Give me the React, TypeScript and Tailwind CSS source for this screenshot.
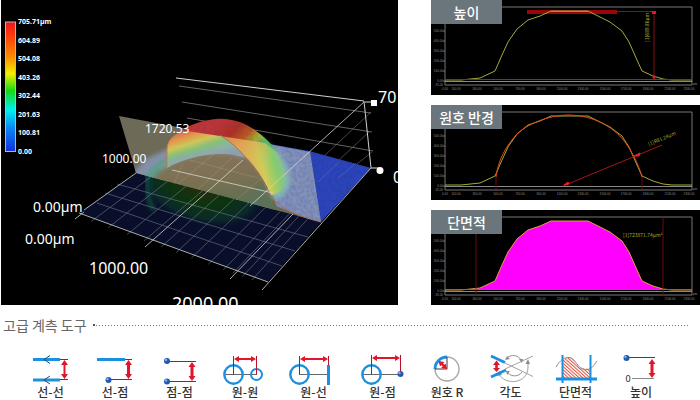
import type { ReactNode } from 'react';

type Point = [number, number];

interface ProfileProps {
  label: string;
  under?: ReactNode;
  curveColor?: string;
  children?: ReactNode;
}

interface Tool {
  name: string;
  icon: ReactNode;
}

const SCALE = ['705.71µm', '604.89', '504.08', '403.26', '302.44', '201.63', '100.81', '0.00'];

const PROFILE: Point[] = [
  [14, 80], [30, 80], [49, 78], [64, 71], [71, 55], [77, 42], [86, 29], [97, 20], [109, 16],
  [120, 11], [157, 11], [167, 16], [179, 22], [191, 31], [198, 42], [206, 60], [211, 71],
  [222, 76], [232, 79], [241, 80], [261, 80],
];
const PROFILE_POINTS = PROFILE.map((p) => p.join(',')).join(' ');

const X_TICKS = [14, 25, 46, 67, 89, 110, 131, 152, 174, 195, 217, 239, 258];
const Y_TICKS = [31, 41, 51, 61, 71];

// Position of the cross lines along the front edge of the floor
const FLOOR_LINES = [0.08, 0.17, 0.27, 0.36, 0.45, 0.53, 0.61, 0.7, 0.78, 0.83, 0.88, 0.93];

const floorFront = (t: number): Point => [79 + 189 * t, 213 + 69 * t];
const floorBack = (t: number): Point => [136 + 185 * t, 173 + 49 * t];

function SurfaceView() {
  return (
    <svg viewBox="1 0 397 305" className="block w-full bg-black" role="img" aria-label="3D">
      <defs>
        <linearGradient id="scale" x1="0" y1="0" x2="0" y2="1">
          <stop offset="0" stopColor="#f0141e" />
          <stop offset="0.1" stopColor="#fb3a0c" />
          <stop offset="0.27" stopColor="#fb8a00" />
          <stop offset="0.4" stopColor="#f2f200" />
          <stop offset="0.53" stopColor="#14d814" />
          <stop offset="0.68" stopColor="#00f0f0" />
          <stop offset="0.82" stopColor="#0a86f4" />
          <stop offset="1" stopColor="#1030e0" />
        </linearGradient>
        <linearGradient id="cap" x1="0" y1="0" x2="1" y2="0.35">
          <stop offset="0" stopColor="#b8362c" />
          <stop offset="0.35" stopColor="#c43436" />
          <stop offset="0.6" stopColor="#b03022" />
          <stop offset="0.76" stopColor="#bd5a1c" />
          <stop offset="0.88" stopColor="#a5b030" />
          <stop offset="1" stopColor="#58b468" />
        </linearGradient>
        <linearGradient id="wall" gradientUnits="userSpaceOnUse" x1="188" y1="128" x2="199" y2="163">
          <stop offset="0" stopColor="#d4664c" />
          <stop offset="0.22" stopColor="#e2974c" />
          <stop offset="0.42" stopColor="#cdc65a" />
          <stop offset="0.6" stopColor="#86c078" />
          <stop offset="0.8" stopColor="#8cb2a8" />
          <stop offset="1" stopColor="#909fb0" />
        </linearGradient>
        <linearGradient id="flank" gradientUnits="userSpaceOnUse" x1="246" y1="164" x2="286" y2="152">
          <stop offset="0" stopColor="#e3ae58" />
          <stop offset="0.35" stopColor="#d2cb58" />
          <stop offset="0.65" stopColor="#86cc6c" />
          <stop offset="1" stopColor="#84b8b4" />
        </linearGradient>
        <linearGradient id="flankTop" gradientUnits="userSpaceOnUse" x1="220" y1="130" x2="262" y2="186">
          <stop offset="0" stopColor="#dc7450" />
          <stop offset="0.35" stopColor="#e2a054" stopOpacity="0.8" />
          <stop offset="0.8" stopColor="#c8c85c" stopOpacity="0" />
        </linearGradient>
        <linearGradient id="inside" x1="0" y1="0" x2="0.2" y2="1">
          <stop offset="0" stopColor="#8a7660" />
          <stop offset="0.6" stopColor="#7c7052" />
          <stop offset="1" stopColor="#5a7052" />
        </linearGradient>
        <radialGradient id="under" gradientUnits="userSpaceOnUse" cx="200" cy="184" r="66" gradientTransform="matrix(1 .2 0 .6 0 36)">
          <stop offset="0" stopColor="#2b2a0c" />
          <stop offset="0.45" stopColor="#0c340f" />
          <stop offset="0.8" stopColor="#0a2a28" />
          <stop offset="1" stopColor="#0a1330" stopOpacity="0" />
        </radialGradient>
        <filter id="soft" x="-20%" y="-20%" width="140%" height="140%">
          <feGaussianBlur stdDeviation="2" />
        </filter>
        <filter id="grain" x="0" y="0" width="100%" height="100%">
          <feTurbulence type="fractalNoise" baseFrequency="0.28" numOctaves="2" seed="4" />
          <feColorMatrix values="0 0 0 0 0.02  0 0 0 0 0.05  0 0 0 0 0.35  1.6 0 0 0 -0.55" />
          <feComposite in2="SourceGraphic" operator="in" />
        </filter>
        <clipPath id="floorClip">
          <path d="M79 213 136 173 321 222 268 282Z" />
        </clipPath>
        <clipPath id="planeClip">
          <path d="M119 116 310 152 321 222 136 173Z" />
        </clipPath>
      </defs>

      {/* Back wall */}
      <g stroke="#7c7c7c" strokeWidth="0.8" fill="none">
        <path d="M179 86 371 113M182 102 372 132M187 118 373 151" />
        <path d="M371 112 323 157M369 132 338 161M372 152 357 164" opacity="0.7" />
      </g>
      <path d="M176 78 364 101 371 168" stroke="#d0d0d0" fill="none" />

      {/* Floor in front of the section plane */}
      <path d="M79 213 136 173 321 222 268 282Z" fill="#090f2a" />
      <g clipPath="url(#floorClip)">
        <path d="M145 160C143 210 158 224 190 232 225 240 262 226 300 214L240 150Z" fill="url(#under)" />
        <path d="M148 172C146 196 149 204 155 210" stroke="#0f453c" strokeWidth="5" fill="none" filter="url(#soft)" />
      </g>

      {/* Scanned surface behind the plane */}
      <path d="M270 144 309 151 371 168 321 222 272 196Z" fill="#2b44bd" />
      <path d="M270 144 309 151 371 168 321 222 272 196Z" fill="#fff" filter="url(#grain)" />

      {/* Section plane */}
      <path d="M119 116 310 152 321 222 136 173Z" fill="#6d6a58" />
      <g clipPath="url(#planeClip)">
        <path d="M125 180 148 158 170 148 165 190Z" fill="#8590ab" filter="url(#soft)" />
        <path d="M262 142 312 150 323 224 276 206Z" fill="#8492b8" />
        <path d="M262 142 312 150 323 224 276 206Z" fill="#fff" filter="url(#grain)" opacity="0.3" />
      </g>

      {/* Dome */}
      <g clipPath="url(#planeClip)">
        <path d="M167 162C150 172 145 184 147 200L280 214 268 191 250 160 222 140Z" fill="url(#inside)" />
        <path d="M147 196C145 178 154 168 168 162" stroke="#5c9c88" strokeWidth="8" fill="none" filter="url(#soft)" />
        <path d="M240 206 276 214 262 184Z" fill="#5c7258" filter="url(#soft)" />
      </g>
      <path d="M167 168 167 149C168 136 180 130 200 130L222 135C235 145 244 152 250 160 226 148 188 156 167 168Z" fill="url(#wall)" />
      <path d="M160 168C172 160 188 156 202 153 218 150 234 152 244 157" stroke="#919eae" strokeWidth="3" fill="none" opacity="0.7" filter="url(#soft)" />
      <path d="M167 167 167 149C168 140 172 136 180 133" stroke="#cc7a48" fill="none" />
      <path d="M262 141C282 150 290 168 290 184 285 194 280 202 272 198Z" fill="#84b8b0" filter="url(#soft)" />
      <path d="M218 133 267 141C279 152 286 168 285 180 283 190 277 195 271 195 262 174 246 152 218 133Z" fill="url(#flank)" />
      <path d="M218 133 267 141 285 180 270 192C262 174 246 152 218 133Z" fill="url(#flankTop)" />
      <path d="M181 130C194 123 205 120 216 119 230 118 242 122 250 127 262 134 273 145 277 152L265 143 220 136Z" fill="url(#cap)" />
      <path d="M181 130C194 123 205 120 216 119 230 118 242 122 250 127L265 143 220 136Z" fill="#fff" filter="url(#grain)" opacity="0.25" />
      <path d="M220 135C242 148 258 172 268 191 274 206 296 216 321 222" stroke="#a8705c" fill="none" />

      {/* Floor grid */}
      <g stroke="#8f97a6" strokeWidth="0.7" fill="none" opacity="0.65">
        {FLOOR_LINES.map((t) => {
          const [x1, y1] = floorFront(t);
          const [x2, y2] = floorBack(t);
          return <line key={t} x1={x1 - 3} y1={y1 + 3} x2={x2} y2={y2} />;
        })}
        <path d="M97 203 282 266M105 193 295 251M117 184 308 237" />
      </g>
      <g stroke="#c9c2ac" strokeWidth="0.6" fill="none" opacity="0.35">
        <path d="M178 184 214 154M198 189 232 158M190 160 258 178M236 200 262 178M182 165 174 184" />
      </g>
      <g stroke="#d6d6d0" fill="none" strokeWidth="0.8">
        <path d="M75 219 84 212M79 213 268 282M136 173 84 210M145 247 243 160M172 170 273 193M230 279 293 214" />
        <path d="M262 290 371 168M250 206 364 102" />
      </g>
      <g stroke="#7a84c4" strokeWidth="0.6" opacity="0.6">
        <path d="M318 182 340 161M338 178 356 163" />
      </g>
      <path d="M365 102H374M371 168H380" stroke="#ddd" />
      <rect x="371" y="100" width="6" height="6" fill="#fff" />
      <circle cx="380" cy="170.500" r="3.500" fill="#fff" />

      <g fill="#fff" className="font-['Noto_Sans',sans-serif]">
        <g fontSize="14">
          <text x="33" y="212">0.00µm</text>
          <text x="25" y="244">0.00µm</text>
        </g>
        <g fontSize="16">
          <text x="89" y="274">1000.00</text>
          <text x="378" y="103">70</text>
          <text x="393" y="183">0</text>
        </g>
        <text x="172" y="310" fontSize="18">2000.00</text>
        <g fontSize="12">
          <text x="145" y="133">1720.53</text>
          <text x="102" y="163">1000.00</text>
        </g>
        <g fontSize="7" fontWeight="700">
          {SCALE.map((value, i) => (
            <text key={value} x="18" y={24 + i * 18.5}>{value}</text>
          ))}
        </g>
      </g>
      <rect x="5.500" y="22" width="10" height="129.500" fill="url(#scale)" stroke="#b8b8c0" />
    </svg>
  );
}

function ProfileChart({ label, under, curveColor = '#a8a83c', children }: ProfileProps) {
  return (
    <figure className="relative bg-black">
      <svg viewBox="0 0 269 95" className="block w-full" aria-hidden="true">
        {under}
        <path d="M14 7H261V85H14Z" stroke="#777" fill="none" />
        <path d="M14 81.500H261" stroke="#8a8a8a" />
        <path d="M12 31h2M12 41h2M12 51h2M12 61h2M12 71h2M12 81h2" stroke="#777" />
        <g fill="#8c8c8c" fontSize="3" className="font-['Liberation_Sans',sans-serif]">
          {Y_TICKS.map((y, i) => (
            <text key={y} x="12" y={y + 1} textAnchor="end">{500 - i * 100}.00</text>
          ))}
          <text x="12" y="82" textAnchor="end">0.00</text>
          <text x="12" y="86" textAnchor="end">-35.00</text>
          <text x="262" y="85">µm</text>
          {X_TICKS.map((x, i) => (
            <text key={x} x={x} y="90" textAnchor="middle">{i === 0 ? '0.00' : `${i * 200 - 100}.00`}</text>
          ))}
        </g>
        <polyline points={PROFILE_POINTS} fill="none" stroke={curveColor} />
        {children}
      </svg>
      <figcaption className="absolute top-0 left-0 w-[71px] bg-[#6a757c] text-center text-sm leading-6 font-medium text-white">
        {label}
      </figcaption>
    </figure>
  );
}

function Ball({ x, y }: { x: number; y: number }) {
  return (
    <>
      <circle cx={x} cy={y} r="3" fill="#2458b0" />
      <circle cx={x - 1} cy={y - 1} r="1.200" fill="#7fb2ee" />
    </>
  );
}

function VArrow({ x, y1, y2, bar = 2 }: { x: number; y1: number; y2: number; bar?: number }) {
  return (
    <>
      <path d={`M${x} ${y1 + 3}V${y2 - 3}`} stroke="#e5142b" strokeWidth={bar} />
      <path
        d={`M${x} ${y1}l3.500 5h-7zM${x} ${y2}l3.500 -5h-7z`}
        fill="#e5142b"
      />
    </>
  );
}

function HArrow({ y, x1, x2 }: { y: number; x1: number; x2: number }) {
  return (
    <>
      <path d={`M${x1 + 3} ${y}H${x2 - 3}`} stroke="#e5142b" strokeWidth="2" />
      <path d={`M${x1} ${y}l5 3v-6zM${x2} ${y}l-5 3v-6z`} fill="#e5142b" />
    </>
  );
}

const TOOLS: Tool[] = [
  {
    name: '선-선',
    icon: (
      <>
        <path d="M-18 6.500H9M-18 27H9" stroke="#1b8fe0" strokeWidth="2.800" />
        <path d="M-1 2.500-7 6.500-1 10.500M-1 23-7 27-1 31" stroke="#234a66" />
        <path d="M9 6.500H17M9 26.500H17" stroke="#b3122a" />
        <VArrow x={13.5} y1={7} y2={26} />
      </>
    ),
  },
  {
    name: '선-점',
    icon: (
      <>
        <path d="M-18 6.500H10" stroke="#1b8fe0" strokeWidth="3" />
        <path d="M10 6.500H17M-6 26.500H17" stroke="#b3122a" />
        <Ball x={-6.5} y={27} />
        <VArrow x={13.5} y1={7} y2={26} bar={3} />
      </>
    ),
  },
  {
    name: '점-점',
    icon: (
      <>
        <path d="M-12 8.500H16M-12 28.500H16" stroke="#b3122a" />
        <Ball x={-13} y={8} />
        <Ball x={-13} y={28.5} />
        <VArrow x={12} y1={9} y2={28} bar={3} />
      </>
    ),
  },
  {
    name: '원-원',
    icon: (
      <>
        <path d="M-21 21.500H12" stroke="#666" />
        <circle cx="-11.500" cy="21.500" r="9.200" stroke="#1b8fe0" strokeWidth="2.400" />
        <circle cx="11.500" cy="21.500" r="5.500" stroke="#1b8fe0" strokeWidth="2" />
        <path d="M-11.500 3V21.500M11.500 3V21.500" stroke="#b3122a" />
        <HArrow y={6} x1={-11} x2={11} />
      </>
    ),
  },
  {
    name: '원-선',
    icon: (
      <>
        <path d="M-15 21.500H14" stroke="#666" />
        <circle cx="-14.500" cy="21.500" r="9.200" stroke="#1b8fe0" strokeWidth="2.400" />
        <path d="M-14.500 3V21.500M14.500 3V13" stroke="#b3122a" />
        <path d="M14.500 12V32" stroke="#1b8fe0" strokeWidth="3" />
        <HArrow y={6} x1={-14} x2={14} />
      </>
    ),
  },
  {
    name: '원-점',
    icon: (
      <>
        <path d="M-21 21.500H17" stroke="#666" />
        <circle cx="-11.500" cy="21.500" r="9.200" stroke="#1b8fe0" strokeWidth="2.400" />
        <path d="M-11.500 2V21.500M17.500 2V21" stroke="#b3122a" />
        <Ball x={17.5} y={21} />
        <HArrow y={5} x1={-11} x2={17} />
      </>
    ),
  },
  {
    name: '원호 R',
    icon: (
      <>
        <circle cx="0" cy="16" r="12" stroke="#a9a9a9" strokeWidth="1.400" />
        <path d="M-12 16A12 12 0 0 1 0 4" stroke="#1b8fe0" strokeWidth="2.800" />
        <path d="M0 4V16H-12" stroke="#4a3038" />
        <path d="M-6 10-2 14" stroke="#e5142b" strokeWidth="2.400" />
        <path d="M-8.500 8 -2.500 9 -7 13.500ZM0 16 -6 15 -1.500 10.500Z" fill="#e5142b" />
      </>
    ),
  },
  {
    name: '각도',
    icon: (
      <>
        <path d="M-6 10 22 23.500M-6 16 22 3" stroke="#a2a2a2" />
        <path d="M-4 5A9 9 0 0 1 10 7M11 19A9 9 0 0 1-3 20" stroke="#8d8d8d" />
        <path d="M-12 21C-7 32 17 32 17 14V8" stroke="#a2a2a2" />
        <path d="M-6 7-4 3-1 6ZM8 6H12L11 10ZM14.500 11 17 6 19 11ZM-14 23-12 18-9 22ZM-5 18H-1L-4 22Z" fill="#8d8d8d" />
        <path d="M-20 3-6 9.500M-20 24-5 17" stroke="#1b8fe0" strokeWidth="3" />
        <path d="M-14.500 10V17" stroke="#e5142b" strokeWidth="2.600" />
        <path d="M-14.500 7.500-11 12H-18ZM-14.500 19-11 15H-18Z" fill="#e5142b" />
      </>
    ),
  },
  {
    name: '단면적',
    icon: (
      <>
        <defs>
          <pattern id="hatch" width="2.400" height="2.400" patternUnits="userSpaceOnUse" patternTransform="rotate(-48)">
            <rect width="1" height="2.400" fill="#d8503e" />
          </pattern>
        </defs>
        <path d="M-14 7C-11 4-5 3-2 7 2 12 4 17 15 15.500V26H-14Z" fill="url(#hatch)" />
        <path d="M-20 14C-16 7-11 4-7 4.500 0 5 1 16 9 16.500 16 17 18 12 21 8" stroke="#9a8a86" />
        <path d="M-13.500 2V30M14.500 2V30" stroke="#1b8fe0" strokeWidth="2" />
        <path d="M-20 26H21" stroke="#1b8fe0" strokeWidth="3" />
      </>
    ),
  },
  {
    name: '높이',
    icon: (
      <>
        <path d="M-12 4.500H14" stroke="#b3122a" />
        <Ball x={-14.5} y={5} />
        <path d="M-9 25.500H13" stroke="#8a8a8a" />
        <VArrow x={11} y1={6} y2={25} bar={3} />
        <text x="-13" y="29" fontSize="9" textAnchor="middle" fill="#222" className="font-['Noto_Sans',sans-serif]">0</text>
      </>
    ),
  },
];

export default function App() {
  return (
    <main className="bg-white font-['Noto_Sans_CJK_KR',sans-serif]">
      <section className="grid grid-cols-[397fr_269fr] items-start gap-x-[33px] pl-px">
        <SurfaceView />
        <div className="flex flex-col gap-2.5">
          <ProfileChart label="높이" under={<rect x="96" y="10" width="90" height="4" fill="#980808" />}>
            <path d="M14 79.500H261" stroke="#b01c1c" />
            <path d="M186 11.500H223V79" stroke="#8a1010" fill="none" />
            <path d="M221 11h4v3h-4zM221 77l2-2 2 2-2 2z" fill="#e01818" />
            <path d="M120 11.500H157" stroke="#d87818" />
            <text transform="translate(218 42) rotate(-90)" fontSize="5" fill="#a0a030">[1]689.86µm</text>
          </ProfileChart>
          <ProfileChart label="원호 반경">
            <path
              d="M65 72C67 56 74 42 86 29 96 19 118 10 137 10 163 10 185 23 196 40 204 52 209 64 211 72"
              stroke="#e04818"
              fill="none"
            />
            <path d="M65 72V84M211 72V84" stroke="#6a0c0c" />
            <path d="M132 81 231 40" stroke="#a81414" />
            <path d="M133 80l4-3 1 2zM203 51l6-3-1 3z" stroke="#f02020" fill="#f02020" />
            <text transform="translate(218 41) rotate(-23)" fontSize="5" fill="#a0a030">[1]R81.24µm</text>
          </ProfileChart>
          <ProfileChart
            label="단면적"
            curveColor="#e0a040"
            under={<polygon points={PROFILE_POINTS} fill="#ff00ff" />}
          >
            <path d="M45 7V85M232 7V85" stroke="#6a0c0c" />
            <path d="M14 79.500H261" stroke="#c8502c" />
            <text x="192" y="27" fontSize="5" fill="#b0a830">[1]723871.74µm²</text>
          </ProfileChart>
        </div>
      </section>

      <section className="pt-2.5">
        <div className="flex items-center pr-2.5 pl-[3px]">
          <h2 className="pr-1.5 text-sm leading-5 text-[#666]">고급 계측 도구</h2>
          <span className="mr-px size-0.5 bg-[#555]" />
          <div className="h-px flex-1 bg-[repeating-linear-gradient(90deg,#777_0_1px,#fff_1px_3px)]" />
        </div>
        <ul className="grid grid-cols-[65fr_64fr_65fr_66fr_71fr_67fr_62fr_65fr_65fr_66fr] pt-[18px] pr-[26px] pl-[18px]">
          {TOOLS.map((tool) => (
            <li key={tool.name} className="flex flex-col items-center">
              <svg viewBox="-26 0 52 32" className="h-8 w-[52px] overflow-visible" fill="none" aria-hidden="true">
                {tool.icon}
              </svg>
              <span className="text-xs leading-[14px] font-medium text-[#333]">{tool.name}</span>
            </li>
          ))}
        </ul>
      </section>
    </main>
  );
}
